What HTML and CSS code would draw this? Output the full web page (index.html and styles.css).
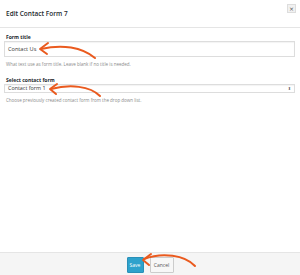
FILE: index.html
```html
<!DOCTYPE html>
<html>
<head>
<meta charset="utf-8">
<link rel="stylesheet" href="styles.css">
</head>
<body>
<div class="modal">
  <header class="head">
    <h1 class="title">Edit Contact Form 7</h1>
    <button class="close" aria-label="Close">×</button>
  </header>
  <main class="body">
    <div class="field">
      <label class="label">Form title</label>
      <div class="input">Contact Us</div>
      <p class="help">What text use as form title. Leave blank if no title is needed.</p>
    </div>
    <div class="field second">
      <label class="label">Select contact form</label>
      <div class="select"><span>Contact form 1</span><span class="updown">⬍</span></div>
      <p class="help">Choose previously created contact form from the drop down list.</p>
    </div>
  </main>
  <footer class="foot">
    <button class="btn primary">Save</button>
    <button class="btn">Cancel</button>
  </footer>
  <svg class="arrows" width="300" height="275" viewBox="0 0 300 275">
    <g fill="none" stroke="#ea5a1e" stroke-width="2" stroke-linecap="round" stroke-linejoin="round">
      <path d="M95 58 C82 47 62 44 41 49"/>
      <path d="M48 43 L40 49 L47 54"/>
      <path d="M100 96 C90 86 70 84 51 89"/>
      <path d="M57 84 L50 89 L56 94"/>
      <path d="M195 266 C185 255 162 252 144 259"/>
      <path d="M151 254 L143 260 L149 265"/>
    </g>
  </svg>
</div>
</body>
</html>
```
FILE: styles.css
```css
* { box-sizing: border-box; }
html, body { margin: 0; padding: 0; background: #fff; }
body { font-family: "Open Sans", "Liberation Sans", sans-serif; color: #23282d; }
.modal { position: relative; width: 300px; height: 275px; display: flex; flex-direction: column; }
.head { height: 28px; border-bottom: 1px solid #e5e5e5; display: flex; justify-content: space-between; padding: 0 4px 0 6px; align-items: flex-start; }
.title { margin: 0; font-size: 6.5px; font-weight: 600; line-height: 28px; color: #23282d; }
.close { margin-top: 4px; width: 9px; height: 9px; padding: 0; border: 1px solid #ddd; background: #f1f1f1; font-size: 6px; line-height: 7px; color: #555; font-family: "DejaVu Sans", sans-serif; }
.body { flex: 1; padding: 5px 5px 0 4px; }
.field { display: flex; flex-direction: column; }
.second { margin-top: 8px; }
.label { font-size: 5px; font-weight: 700; color: #23282d; line-height: 8px; padding-left: 2px; }
.input { height: 16px; border: 1px solid #ddd; box-shadow: inset 0 1px 1px rgba(0,0,0,0.05); font-size: 5.6px; line-height: 14px; padding-left: 3px; color: #333; }
.select { height: 9px; border: 1px solid #ddd; box-shadow: inset 0 1px 1px rgba(0,0,0,0.05); font-size: 5.4px; line-height: 7px; padding: 0 3px; color: #333; display: flex; justify-content: space-between; }
.updown { font-size: 4px; color: #555; font-family: "DejaVu Sans", sans-serif; }
.help { margin: 3px 0 0 2px; font-size: 4.5px; line-height: 8px; color: #8a8a8a; }
.foot { height: 23px; background: #f5f5f5; border-top: 1px solid #e5e5e5; display: flex; justify-content: center; align-items: flex-start; gap: 6px; padding-top: 4px; }
.btn { height: 16px; padding: 0 2px; border: 1px solid #ccc; background: #f7f7f7; font-family: "Open Sans", "Liberation Sans", sans-serif; font-size: 5px; color: #555; border-radius: 1px; width: 24px; }
.primary { background: #2ea2cc; border-color: #2a90b8; color: #fff; width: 17px; }
.arrows { position: absolute; left: 0; top: 0; pointer-events: none; }
```
